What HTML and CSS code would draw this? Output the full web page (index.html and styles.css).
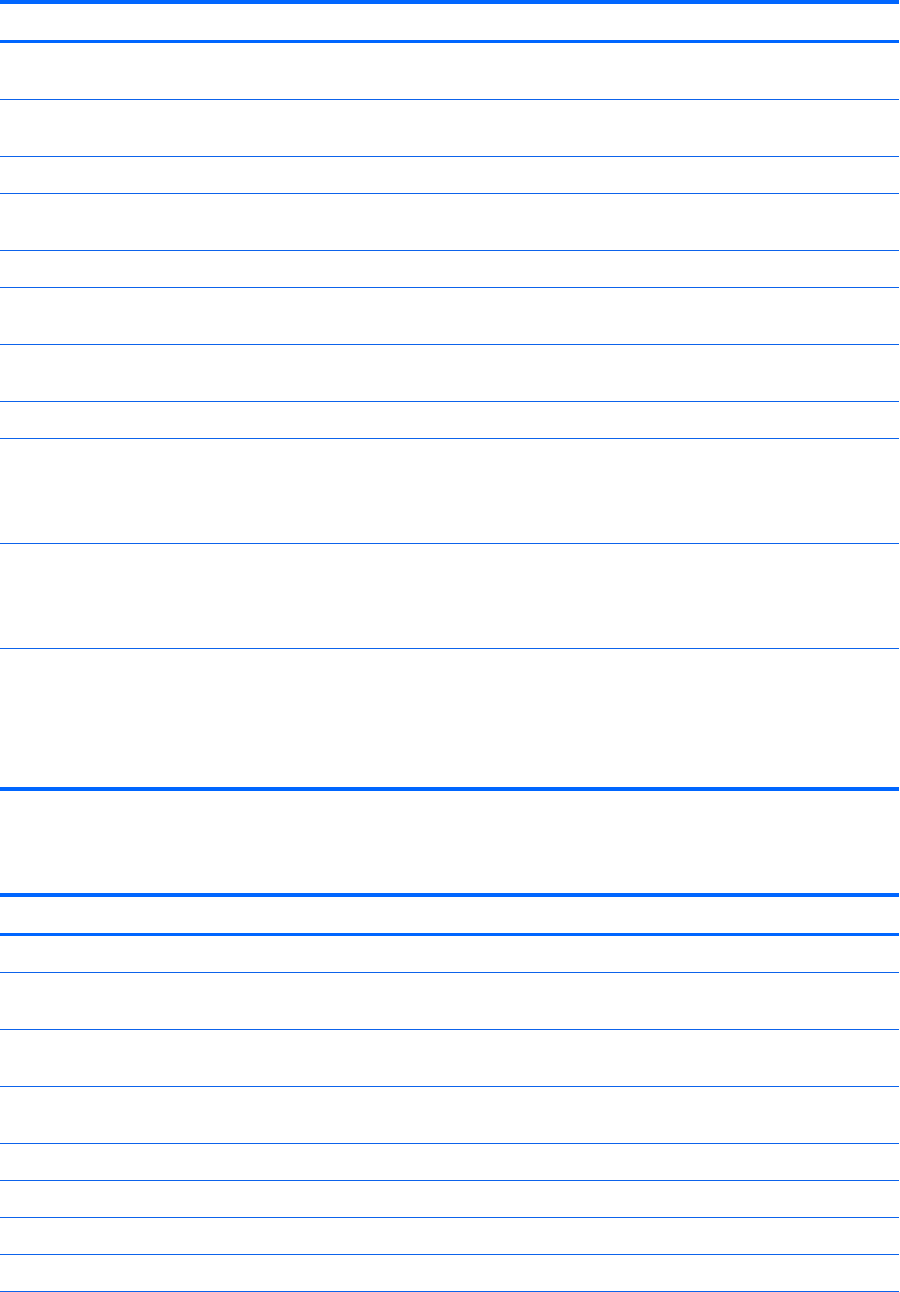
FILE: index.html
```html
<!DOCTYPE html>
<html lang="en">
<head>
<meta charset="utf-8">
<title>Tables</title>
<link rel="stylesheet" href="styles.css">
</head>
<body>
<div class="page">
  <div class="table">
    <div class="row head h36"></div>
    <div class="row h56"></div>
    <div class="row h56"></div>
    <div class="row h36"></div>
    <div class="row h56"></div>
    <div class="row h36"></div>
    <div class="row h56"></div>
    <div class="row h56"></div>
    <div class="row h36"></div>
    <div class="row h104"></div>
    <div class="row h104"></div>
    <div class="row last h138"></div>
  </div>
  <div class="table second">
    <div class="row head h36"></div>
    <div class="row h36"></div>
    <div class="row h56"></div>
    <div class="row h56"></div>
    <div class="row h56"></div>
    <div class="row h36"></div>
    <div class="row h36"></div>
    <div class="row h36"></div>
    <div class="row h36"></div>
  </div>
</div>
</body>
</html>
```

FILE: styles.css
```css
html, body {
  margin: 0;
  padding: 0;
  background: #ffffff;
  font-family: "Liberation Sans", Arial, sans-serif;
}

.page {
  width: 899px;
  display: flex;
  flex-direction: column;
}

.table {
  display: flex;
  flex-direction: column;
  border-top: 4px solid #0066ff;
}

.second {
  margin-top: 102px;
}

.row {
  border-bottom: 1px solid #0d63eb;
}

.row.head {
  border-bottom: 3px solid #0066ff;
}

.row.last {
  border-bottom: 4px solid #0066ff;
}

.h36 { height: 36px; }
.h56 { height: 56px; }
.h104 { height: 104px; }
.h138 { height: 138px; }
```
